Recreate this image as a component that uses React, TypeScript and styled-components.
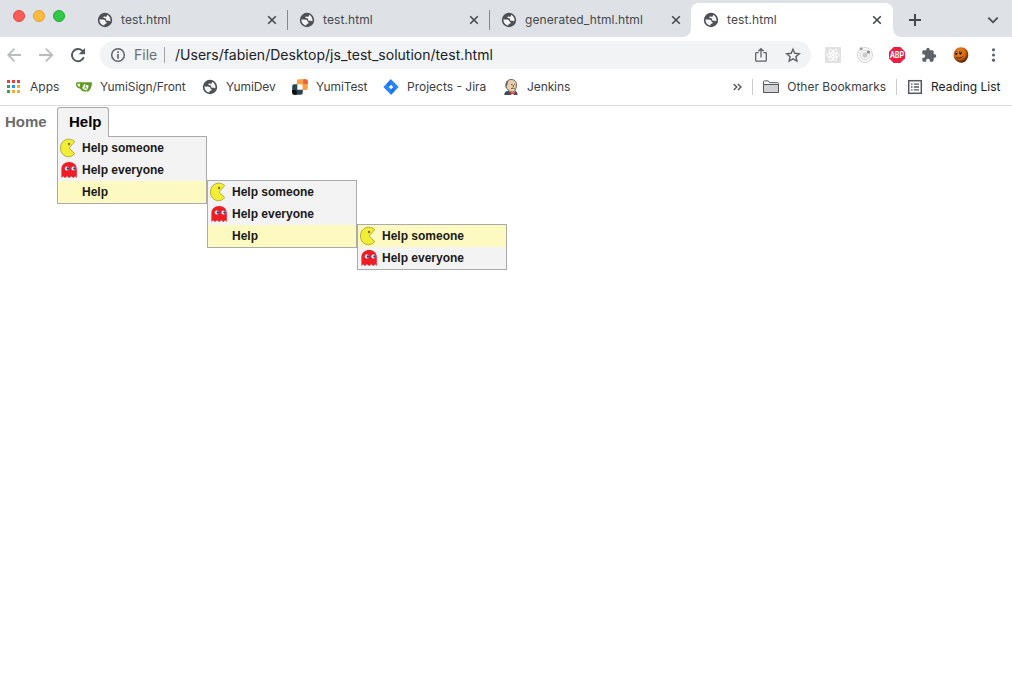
import React from 'react';
import styled, { createGlobalStyle, css } from 'styled-components';

const GlobalStyle = createGlobalStyle`
  * { box-sizing: border-box; }
  body { margin: 0; background: #fff; font-family: Inter, sans-serif; }
  svg { display: block; flex: none; }
`;

/* ---------- window frame ---------- */

const Window = styled.div`
  display: flex;
  flex-direction: column;
  height: 690px;
  overflow: hidden;
`;

const TabStrip = styled.header`
  display: flex;
  align-items: flex-end;
  height: 37px;
  background: #dee1e6;
`;

const TrafficLights = styled.div`
  display: flex;
  gap: 8px;
  width: 86px;
  height: 37px;
  padding: 10px 0 0 13px;
`;

const Light = styled.span<{ $fill: string; $edge: string }>`
  width: 12px;
  height: 12px;
  border-radius: 50%;
  background: ${p => p.$fill};
  border: 1px solid ${p => p.$edge};
`;

const Tab = styled.div<{ $active?: boolean; $divider?: boolean }>`
  position: relative;
  display: flex;
  align-items: center;
  width: 202px;
  height: 34px;
  padding: 0 10px 0 11px;
  color: #45494d;
  ${p => p.$divider && css`
    &::before {
      content: '';
      position: absolute;
      right: 0;
      top: 7px;
      width: 1px;
      height: 20px;
      background: #84878b;
    }
  `}
  ${p => p.$active && css`
    margin-left: -1px;
    padding-left: 12px;
    background: #fff;
    border-radius: 8px 8px 0 0;
    &::before, &::after {
      content: '';
      position: absolute;
      bottom: 0;
      width: 8px;
      height: 8px;
    }
    &::before { left: -8px; background: radial-gradient(circle at 0 0, transparent 7.5px, #fff 8px); }
    &::after { right: -8px; background: radial-gradient(circle at 100% 0, transparent 7.5px, #fff 8px); }
  `}
`;

const TabTitle = styled.span`
  flex: 1;
  margin-left: 8px;
  font-size: 12px;
  line-height: 16px;
  letter-spacing: 0.1px;
  white-space: nowrap;
`;

const NewTab = styled.div`
  display: flex;
  align-items: center;
  flex: 1;
  height: 34px;
  padding-left: 16px;
`;

const TabSearch = styled.div`
  display: flex;
  align-items: center;
  height: 34px;
  padding-right: 13px;
`;

/* ---------- toolbar ---------- */

const Toolbar = styled.div`
  display: flex;
  align-items: center;
  height: 36px;
  padding: 0 10px 0 6px;
`;

const NavButtons = styled.div`
  display: flex;
  gap: 16px;
  width: 94px;
`;

const AddressBar = styled.div`
  display: flex;
  align-items: center;
  width: 711px;
  height: 28px;
  padding: 0 10px;
  border-radius: 14px;
  background: #f1f3f4;
  font-size: 14px;
  line-height: 20px;
  color: #202124;
`;

const Scheme = styled.span`
  width: 30px;
  margin-left: 8px;
  color: #6b6f73;
`;

const Divider = styled.span<{ $tone?: string }>`
  width: 1px;
  height: 16px;
  flex: none;
  background: ${p => p.$tone || '#c8cbcf'};
`;

const Url = styled.span`
  flex: 1;
  margin-left: 10px;
  letter-spacing: 0.015px;
`;

const AddressActions = styled.div`
  display: flex;
  gap: 16px;
`;

const Extensions = styled.div`
  display: flex;
  gap: 16px;
  margin-left: 14px;
`;

/* ---------- bookmarks ---------- */

const BookmarksBar = styled.nav`
  display: flex;
  align-items: center;
  height: 33px;
  padding: 0 11.5px 5px 6px;
  border-bottom: 1px solid #dadce0;
  font-size: 12px;
  line-height: 16px;
  color: #3c4043;
`;

const Bookmark = styled.div<{ $width?: number; $dark?: boolean; $tracking?: number }>`
  display: flex;
  align-items: center;
  gap: 8px;
  width: ${p => (p.$width ? p.$width + 'px' : 'auto')};
  letter-spacing: ${p => p.$tracking || 0}px;
  color: ${p => (p.$dark ? '#202124' : 'inherit')};
  white-space: nowrap;
`;

const BookmarksEnd = styled.div`
  display: flex;
  align-items: center;
  flex: 1;
  justify-content: flex-end;
  gap: 10px;
`;

/* ---------- page menu ---------- */

const Page = styled.main`
  flex: 1;
  font-family: "Liberation Sans", Arial, sans-serif;
  font-weight: bold;
`;

const MenuBar = styled.ul`
  display: flex;
  margin: 1px 0 0;
  padding: 0;
  list-style: none;
  font-size: 15px;
  line-height: 28px;
`;

const MenuBarItem = styled.li<{ $open?: boolean }>`
  position: relative;
  width: 57px;
  height: 30px;
  padding-left: 5px;
  border: 1px solid transparent;
  border-width: 1px 0;
  color: #6c6c6c;
  ${p => p.$open && css`
    width: 52px;
    padding-left: 11px;
    border: 1px solid #aaa;
    border-bottom: 0;
    border-radius: 3px 3px 0 0;
    background: #f3f3f3;
    color: #000;
  `}
`;

const TabSeam = styled.span`
  position: absolute;
  z-index: 1;
  left: 0;
  right: 0;
  bottom: 0;
  height: 1px;
  background: #f3f3f3;
`;

const Menu = styled.ul<{ $root?: boolean }>`
  position: absolute;
  top: ${p => (p.$root ? '28px' : '-1px')};
  left: ${p => (p.$root ? '-1px' : 'calc(100% + 1px)')};
  width: 150px;
  margin: 0;
  padding: 0;
  border: 1px solid #aaa;
  background: #f3f3f3;
  list-style: none;
`;

const MenuRow = styled.li<{ $active?: boolean }>`
  position: relative;
  display: flex;
  align-items: center;
  height: 22px;
  font-size: 12px;
  line-height: 22px;
  color: #1a1a1a;
  background: ${p => (p.$active ? '#fcfac1' : 'transparent')};
`;

const RowIcon = styled.span`
  display: flex;
  width: 24px;
  padding-left: 2px;
`;

/* ---------- icons ---------- */

const Globe = () => (
  <svg width="16" height="16" viewBox="0 0 16 16">
    <circle cx="8" cy="8" r="7.2" fill="#4d5155" />
    <path fill="#f4f5f6" d="M10.3 2.7 9.7 4.3c-.2.5-.7.6-1.2.5l-1.3-.2c-.6 0-.9.500-.7 1 .2.7.9.7 1.6.7.7.1.9.5.9 1.100 0 .9.7 1.400 1.600 1.400l1.200-.1c.6 0 1 .3 1.200.9.4-.500.5-1 .5-1.600 0-2.300-1.300-4.300-3.200-5.300z" />
    <path fill="#f4f5f6" d="M2.400 7.600h3.500c1.500 0 2.600.9 2.700 2 .1.500.5.7 1 .7.3.9-.2 1.500-1.100 1.500-.8 0-1 .4-1 1.700-2.900-.1-5.100-2.600-5.100-5.900z" />
  </svg>
);

const Close = () => (
  <svg width="12" height="12" viewBox="0 0 12 12" stroke="#45494d" strokeWidth="1.6">
    <path d="M2.2 2.200l7.600 7.600M9.800 2.200L2.200 9.800" />
  </svg>
);

const Plus = () => (
  <svg width="12" height="12" viewBox="0 0 12 12" stroke="#45494d" strokeWidth="2">
    <path d="M6 0v12M0 6h12" />
  </svg>
);

const ChevronDown = () => (
  <svg width="12" height="12" viewBox="0 0 12 12" fill="none" stroke="#45494d" strokeWidth="1.8">
    <path d="M1.300 3.700L6 8.300l4.700-4.600" />
  </svg>
);

const Arrow = ({ forward }: { forward?: boolean }) => (
  <svg width="16" height="16" viewBox="0 0 16 16" fill="none" stroke="#babcbe" strokeWidth="1.8">
    <path d={forward ? 'M1 8h13M7.900 1.700L14.200 8l-6.300 6.300' : 'M15 8H2.500M8.500 1.700L2.200 8l6.300 6.300'} />
  </svg>
);

const Reload = () => (
  <svg width="16" height="16" viewBox="0 0 16 16">
    <path d="M13.800 10.200A6.100 6.100 0 1 1 12.300 3.700L13.700 5.200" fill="none" stroke="#55595d" strokeWidth="1.9" />
    <path d="M15 1v6.300H8.700z" fill="#55595d" />
  </svg>
);

const Info = () => (
  <svg width="16" height="16" viewBox="0 0 16 16">
    <circle cx="8" cy="8" r="6.300" fill="none" stroke="#5f6368" strokeWidth="1.500" />
    <path d="M7.200 4.300h1.600v1.600H7.200zM7.200 7.100h1.600v4.600H7.200z" fill="#5f6368" />
  </svg>
);

const Share = () => (
  <svg width="16" height="16" viewBox="0 0 16 16" fill="none" stroke="#5f6368" strokeWidth="1.300">
    <path d="M5.600 5.600H3.400c-.4 0-.7.300-.7.700v7.200c0 .4.300.7.700.7h9.200c.4 0 .7-.3.700-.7V6.300c0-.4-.3-.7-.7-.7h-2.200M8 10.500V1.900M5.300 4.300L8 1.700l2.700 2.600" />
  </svg>
);

const Star = () => (
  <svg width="16" height="16" viewBox="0 0 16 16" fill="none" stroke="#5f6368" strokeWidth="1.400">
    <path d="M8 2.200l1.800 4.100 4.500.4-3.400 3 1 4.400L8 11.800l-3.900 2.300 1-4.400-3.400-3 4.500-.4z" />
  </svg>
);

const ReactBadge = () => (
  <svg width="16" height="16" viewBox="0 0 16 16">
    <rect width="16" height="16" fill="#e1e1e1" />
    <g fill="none" stroke="#fff" strokeWidth="0.9">
      <ellipse cx="8" cy="8" rx="6.300" ry="2.400" />
      <ellipse cx="8" cy="8" rx="6.300" ry="2.400" transform="rotate(60 8 8)" />
      <ellipse cx="8" cy="8" rx="6.300" ry="2.400" transform="rotate(120 8 8)" />
    </g>
    <circle cx="8" cy="8" r="1.300" fill="#fff" />
  </svg>
);

const Orbit = () => (
  <svg width="16" height="16" viewBox="0 0 16 16">
    <circle cx="8" cy="8" r="7.400" fill="none" stroke="#d0d0d0" strokeWidth="1" />
    <circle cx="8" cy="8" r="4.800" fill="none" stroke="#d0d0d0" strokeWidth="1" />
    <circle cx="8" cy="8" r="2.700" fill="#cbcbcb" />
    <circle cx="4" cy="1.700" r="1.500" fill="#999" />
    <circle cx="11.400" cy="5" r="1.600" fill="#888" />
  </svg>
);

const AdBlock = () => (
  <svg width="16" height="16" viewBox="0 0 16 16">
    <path d="M4.700 0h6.600L16 4.700v6.600L11.300 16H4.700L0 11.300V4.700z" fill="#ed1e45" />
    <text x="0.900" y="11" textLength="14.200" lengthAdjust="spacingAndGlyphs" fontFamily="Roboto, sans-serif" fontWeight="700" fontSize="8.500" fill="#fff">ABP</text>
  </svg>
);

const Puzzle = () => (
  <svg width="16" height="16" viewBox="0 0 24 24">
    <path fill="#5f6368" d="M20.500 11H19V7c0-1.100-.9-2-2-2h-4V3.500a2.500 2.500 0 0 0-5 0V5H4c-1.100 0-2 .9-2 2v3.800h1.500c1.500 0 2.700 1.200 2.700 2.700S5 16.200 3.500 16.200H2V20c0 1.100.9 2 2 2h3.800v-1.500c0-1.500 1.200-2.700 2.700-2.700s2.700 1.200 2.700 2.700V22H17c1.100 0 2-.9 2-2v-4h1.500a2.500 2.500 0 0 0 0-5z" />
  </svg>
);

const Avatar = () => (
  <svg width="16" height="16" viewBox="0 0 16 16">
    <defs>
      <radialGradient id="face" cx="42%" cy="35%" r="65%">
        <stop offset="0" stopColor="#f58a20" />
        <stop offset=".6" stopColor="#d4640f" />
        <stop offset="1" stopColor="#4a1c05" />
      </radialGradient>
    </defs>
    <path d="M8 .2c4.200 0 7.100 2.900 7.200 7 .1 4.500-2.600 8.300-6.700 8.500C4.200 15.800.7 12.500.6 8.100.5 3.600 3.600.2 8 .2z" fill="url(#face)" />
    <ellipse cx="3.400" cy="6.200" rx="1" ry="1.900" fill="#1c0b02" />
    <ellipse cx="7.500" cy="5.700" rx="1.300" ry="1.900" fill="#1c0b02" />
    <circle cx="3.400" cy="5.200" r=".5" fill="#fff" />
    <circle cx="7.800" cy="4.800" r=".6" fill="#fff" />
    <path d="M3.200 10.300c2 1.200 4.600 1 6.500-.7" fill="none" stroke="#3b1503" strokeWidth=".9" />
  </svg>
);

const Kebab = () => (
  <svg width="16" height="16" viewBox="0 0 16 16" fill="#5f6368">
    <circle cx="8.500" cy="2.800" r="1.600" />
    <circle cx="8.500" cy="8" r="1.600" />
    <circle cx="8.500" cy="13.200" r="1.600" />
  </svg>
);

const APP_DOTS = ['#f03c36', '#f03c36', '#f03c36', '#34a058', '#2d8cf5', '#f9ad22', '#34a058', '#f9ad22', '#f9ad22'];

const AppsGrid = () => (
  <svg width="16" height="16" viewBox="0 0 16 16">
    {APP_DOTS.map((fill, i) => (
      <rect key={i} x={1 + (i % 3) * 5} y={1 + Math.floor(i / 3) * 5} width="3" height="3" fill={fill} />
    ))}
  </svg>
);

const TeaCup = () => (
  <svg width="16" height="16" viewBox="0 0 16 16">
    <path d="M4.500 4H1.600C.5 4 .5 5.400.8 6.300c.4 1.500 1.800 2.500 4.200 2.700" fill="none" stroke="#609926" strokeWidth="1.400" />
    <path d="M4 3.300h11.800c.3 2-.2 4.300-1.200 6.200-.8 1.500-1.600 3-3 3H8c-2.400 0-4-2.200-4.200-4.700z" fill="#609926" />
    <rect x="6.900" y="5.600" width="5.200" height="5.200" rx="1" transform="rotate(25 9.500 8.200)" fill="#fff" />
    <path d="M9.900 5L9 8.100l1.600.8-.6 1.400M9 8.100l-.7 1.600" stroke="#609926" strokeWidth=".8" fill="none" />
  </svg>
);

const YumiMark = () => (
  <svg width="16" height="16" viewBox="0 0 16 16">
    <path d="M4.800 2.300A2 2 0 0 1 6.800.3H13.500a2.300 2.300 0 0 1 2.300 2.300V9a2 2 0 0 1-2 2h-3.300V5.300H4.800z" fill="#f9a146" />
    <path d="M11.200.3h2.300a2.300 2.300 0 0 1 2.300 2.300v2.300h-4.600z" fill="#f0643a" />
    <path d="M.2 7.200a2 2 0 0 1 2-2h3.100v5.500h5.500v3a2 2 0 0 1-2 2H2.500A2.300 2.300 0 0 1 .2 13.400z" fill="#2b444f" />
    <path d="M.2 11h2.500a2 2 0 0 1 2 2v2.700H2.500A2.300 2.300 0 0 1 .2 13.400z" fill="#050708" />
  </svg>
);

const JiraMark = () => (
  <svg width="16" height="16" viewBox="0 0 16 16">
    <path d="M8 .3L15.700 8 8 15.700.3 8z" fill="#2684ff" />
    <path d="M8 .3v5.200L5.500 8 3.900 4.400z" fill="#1f74ee" />
    <path d="M8 15.700v-5.200L10.500 8l1.600 3.600z" fill="#1f74ee" />
    <path d="M8 5.700L10.300 8 8 10.300 5.700 8z" fill="#fff" />
  </svg>
);

const JenkinsMark = () => (
  <svg width="16" height="16" viewBox="0 0 16 16">
    <path d="M1.300 16c0-2.200.7-3.300 3-4l7-.5c2.200.8 3.200 1.900 3.300 4.500z" fill="#335061" />
    <path d="M6 12l2.500 4h2l1.500-4z" fill="#f5f5f5" />
    <path d="M3.300 9C1.800 4 4 .6 8.200.5c4 0 5.700 3 5.200 6.500-.3 3.500-1.700 6-4.200 6C7 13 5.200 11.500 4.300 9.800z" fill="#e9cfae" stroke="#3a2a20" strokeWidth=".7" />
    <path d="M3.100 8.500C2 4.500 3.300 1.700 6 .9 4.700 2.600 5 4.500 4.400 6z" fill="#6d6b6d" />
    <path d="M8 5.500h1.500M11 5.300h1.200M8 9.800c1.200-.8 2.500-.8 3.700 0M10.300 6v2" stroke="#49372c" strokeWidth=".8" fill="none" />
    <path d="M7 12.800l2.500 1 2.900-1.100.3 3-3-.9-2.700 1z" fill="#d33833" />
  </svg>
);

const Overflow = () => (
  <svg width="9" height="8" viewBox="0 0 9 8" fill="none" stroke="#55595d" strokeWidth="1.4">
    <path d="M.7.900L3.800 4 .7 7.100M4.900.900L8 4 4.900 7.100" />
  </svg>
);

const Folder = () => (
  <svg width="16" height="16" viewBox="0 0 16 16" stroke="#55595d">
    <path d="M.5 13.500V2.800c0-.6.3-.9.9-.9h3.800l1.400 1.800h8c.6 0 .9.300.9.900v8.900z" fill="#fff" />
    <path d="M.5 13.500V5.500h15v8z" fill="#d0d1d3" />
  </svg>
);

const ReadingList = () => (
  <svg width="16" height="16" viewBox="0 0 16 16">
    <rect x="1.700" y="1.700" width="12.600" height="12.600" fill="none" stroke="#55595d" strokeWidth="1.500" />
    <path d="M4 5.200h1.500M4 8h1.500M4 10.800h1.500M6.800 5.200H12M6.800 8H12M6.800 10.800H12" stroke="#55595d" strokeWidth="1.300" />
  </svg>
);

const PacMan = () => (
  <svg width="18" height="20" viewBox="0 0 18 20">
    <path d="M14.700 3.600C13.100 1.900 10.900 1.200 8.700 1.200 3.800 1.300.5 5 .5 10s3.500 8.700 7.900 8.700c2.400 0 4.600-.9 6.300-3.100L10.100 11.300C9.400 10.600 9.400 9.400 10.200 8.700z" fill="#f2ee35" stroke="#aaa62a" strokeWidth=".9" strokeLinejoin="round" />
    <circle cx="9" cy="6" r="1.200" fill="#77731c" />
  </svg>
);

const Ghost = () => (
  <svg width="18" height="18" viewBox="0 0 18 18">
    <path d="M1.400 17V8.200C1.400 3.900 4.700 1 9.200 1s7.600 2.900 7.600 7.200V17l-1.700-1.700-1.700 1.800-2.100-1.900-2.100 1.900-2.100-1.900-2.200 1.900-1.700-1.800z" fill="#ee1c25" />
    <ellipse cx="6.900" cy="7.500" rx="2.100" ry="1.900" fill="#fff" />
    <ellipse cx="13.500" cy="7.500" rx="2.100" ry="1.900" fill="#fff" />
    <circle cx="7.900" cy="7.500" r="1.200" fill="#22409a" />
    <circle cx="14.500" cy="7.500" r="1.200" fill="#22409a" />
  </svg>
);

/* ---------- composition ---------- */

const TABS = [
  { title: 'test.html', divider: true },
  { title: 'test.html', divider: true },
  { title: 'generated_html.html' },
  { title: 'test.html', active: true },
];

const BOOKMARKS = [
  { label: 'Apps', width: 70, icon: <AppsGrid /> },
  { label: 'YumiSign/Front', width: 126, icon: <TeaCup />, tracking: -0.08 },
  { label: 'YumiDev', width: 90, icon: <Globe />, tracking: -0.12 },
  { label: 'YumiTest', width: 91, icon: <YumiMark />, tracking: -0.12 },
  { label: 'Projects - Jira', width: 120, icon: <JiraMark /> },
  { label: 'Jenkins', width: 70, icon: <JenkinsMark />, tracking: -0.1 },
];

type MenuEntry = { label: string; icon?: React.ReactNode; active?: boolean; children?: MenuEntry[] };

const someone = (active?: boolean): MenuEntry => ({ label: 'Help someone', icon: <PacMan />, active });
const everyone: MenuEntry = { label: 'Help everyone', icon: <Ghost /> };

const HELP_MENU: MenuEntry[] = [
  someone(),
  everyone,
  {
    label: 'Help',
    active: true,
    children: [
      someone(),
      everyone,
      { label: 'Help', active: true, children: [someone(true), everyone] },
    ],
  },
];

const MenuTree = ({ entries, root }: { entries: MenuEntry[]; root?: boolean }) => (
  <Menu $root={root}>
    {entries.map(e => (
      <MenuRow key={e.label} $active={e.active}>
        <RowIcon>{e.icon}</RowIcon>
        {e.label}
        {e.children && <MenuTree entries={e.children} />}
      </MenuRow>
    ))}
  </Menu>
);

export default function App() {
  return (
    <Window>
      <GlobalStyle />
      <TabStrip>
        <TrafficLights>
          <Light $fill="#fc5b57" $edge="#e2463f" />
          <Light $fill="#fdb93d" $edge="#e0a033" />
          <Light $fill="#33c748" $edge="#24a732" />
        </TrafficLights>
        {TABS.map((t, i) => (
          <Tab key={i} $active={t.active} $divider={t.divider}>
            <Globe />
            <TabTitle>{t.title}</TabTitle>
            <Close />
          </Tab>
        ))}
        <NewTab><Plus /></NewTab>
        <TabSearch><ChevronDown /></TabSearch>
      </TabStrip>

      <Toolbar>
        <NavButtons>
          <Arrow />
          <Arrow forward />
          <Reload />
        </NavButtons>
        <AddressBar>
          <Info />
          <Scheme>File</Scheme>
          <Divider $tone="#9fa2a6" />
          <Url>/Users/fabien/Desktop/js_test_solution/test.html</Url>
          <AddressActions>
            <Share />
            <Star />
          </AddressActions>
        </AddressBar>
        <Extensions>
          <ReactBadge />
          <Orbit />
          <AdBlock />
          <Puzzle />
          <Avatar />
          <Kebab />
        </Extensions>
      </Toolbar>

      <BookmarksBar>
        {BOOKMARKS.map(b => (
          <Bookmark key={b.label} $width={b.width} $tracking={b.tracking}>
            {b.icon}
            {b.label}
          </Bookmark>
        ))}
        <BookmarksEnd>
          <Overflow />
          <Divider />
          <Bookmark><Folder />Other Bookmarks</Bookmark>
          <Divider />
          <Bookmark $dark><ReadingList />Reading List</Bookmark>
        </BookmarksEnd>
      </BookmarksBar>

      <Page>
        <MenuBar>
          <MenuBarItem>Home</MenuBarItem>
          <MenuBarItem $open>
            Help
            <MenuTree entries={HELP_MENU} root />
            <TabSeam />
          </MenuBarItem>
        </MenuBar>
      </Page>
    </Window>
  );
}
